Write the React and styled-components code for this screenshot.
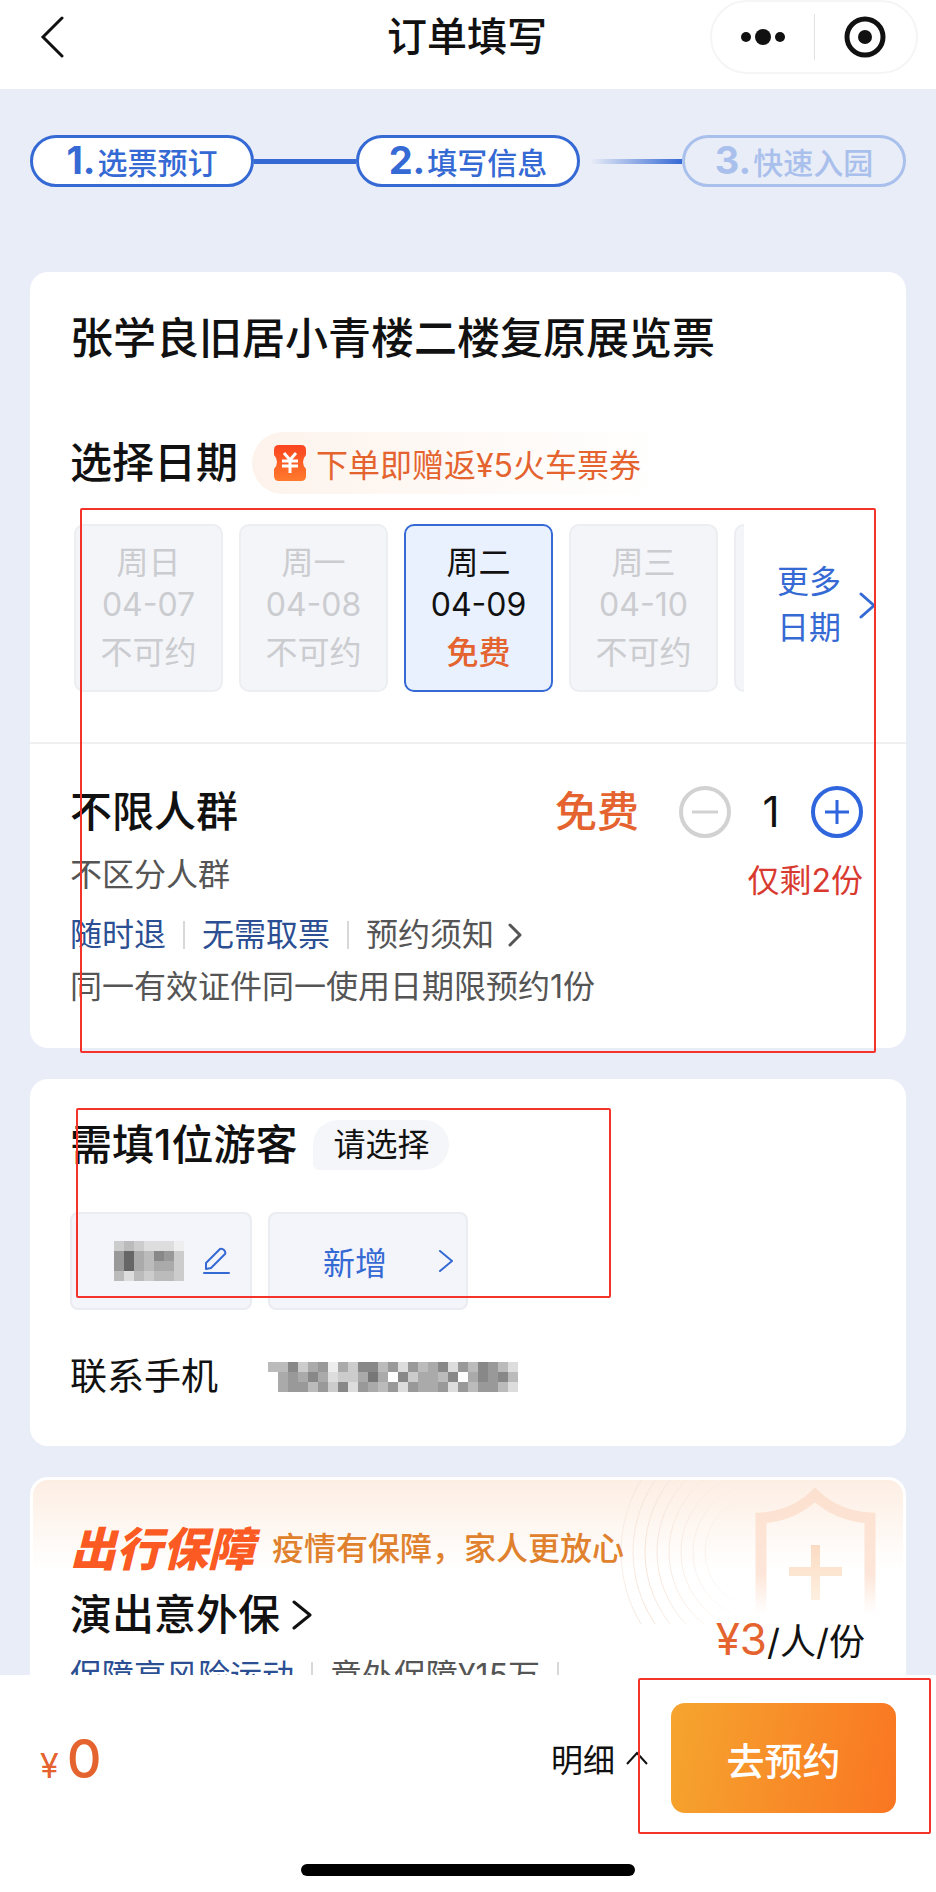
import React, { useState } from "react";
import styled, { createGlobalStyle, css } from "styled-components";

const GlobalStyle = createGlobalStyle`
  * {
    box-sizing: border-box;
  }
  body {
    margin: 0;
    background: #e9edf7;
    color: #111;
    font-family: Inter, "Noto Sans CJK SC", sans-serif;
    font-size: 32px;
  }
  h1, h2, h3, p, ol, ul {
    margin: 0;
    padding: 0;
    font-weight: 400;
    list-style: none;
  }
  button {
    margin: 0;
    padding: 0;
    border: 0;
    background: none;
    color: inherit;
    font: inherit;
    cursor: pointer;
  }
  a {
    color: inherit;
    text-decoration: none;
  }
  svg {
    display: block;
    flex: none;
  }
`;

// Data
const steps = [
  { number: "1.", label: "选票预订", state: "done" },
  { number: "2.", label: "填写信息", state: "current" },
  { number: "3.", label: "快速入园", state: "next" },
];

const dates = [
  { week: "周日", day: "04-07", status: "不可约" },
  { week: "周一", day: "04-08", status: "不可约" },
  { week: "周二", day: "04-09", status: "免费", open: true },
  { week: "周三", day: "04-10", status: "不可约" },
  { week: "", day: "", status: "" },
];

// each hex digit is one grey level
const nameMask = ["cbcddde", "96ab89c", "96abaac", "bdbcbbc"];
const phoneMask = [
  "bb8ca9eac88b9d9ba8d9b89bd",
  "fa9a8adcca7af8caab8fa898b",
  "fa99b9c8d9ab9d9aa9d9b99bd",
];

function Mosaic({ rows, cell, label }) {
  const width = rows[0].length * cell;
  const height = rows.length * cell;
  return (
    <svg width={width} height={height} role="img" aria-label={label} shapeRendering="crispEdges">
      {rows.map((row, y) =>
        row.split("").map((level, x) => (
          <rect
            key={`${x}-${y}`}
            x={x * cell}
            y={y * cell}
            width={cell}
            height={cell}
            fill={`#${level}${level}${level}`}
          />
        ))
      )}
    </svg>
  );
}

function Chevron({ width, height, stroke = 3 }) {
  return (
    <svg width={width} height={height} fill="none" stroke="currentColor" strokeWidth={stroke} strokeLinecap="round" strokeLinejoin="round">
      <path d={`M2 2 L${width - 2} ${height / 2} L2 ${height - 2}`} />
    </svg>
  );
}

function ShieldArt() {
  return (
    <Art width="300" height="150" viewBox="0 0 300 150" fill="none" aria-hidden="true">
      <defs>
        <linearGradient id="shieldFade" gradientUnits="userSpaceOnUse" x1="0" y1="0" x2="0" y2="134">
          <stop offset="0" stopColor="#fce0ce" />
          <stop offset="0.7" stopColor="#fde6d9" />
          <stop offset="1" stopColor="#fde6d9" stopOpacity="0" />
        </linearGradient>
        <linearGradient id="plusFade" gradientUnits="userSpaceOnUse" x1="0" y1="60" x2="0" y2="120">
          <stop offset="0" stopColor="#fbd9c0" />
          <stop offset="1" stopColor="#fdf0e0" />
        </linearGradient>
        <linearGradient id="ringFade" x1="0" y1="0" x2="1" y2="0">
          <stop offset="0" stopColor="#fff" stopOpacity="0.3" />
          <stop offset="0.3" stopColor="#fff" />
          <stop offset="1" stopColor="#fff" stopOpacity="0" />
        </linearGradient>
        <mask id="ringMask" maskUnits="userSpaceOnUse" x="0" y="0" width="140" height="144">
          <rect width="140" height="144" fill="url(#ringFade)" />
        </mask>
      </defs>
      <g mask="url(#ringMask)" stroke="#f5e4d8" strokeWidth="1">
        {[56, 68, 80, 92, 104, 116, 128, 140].map((r) => (
          <circle key={r} cx="158" cy="72" r={r} />
        ))}
      </g>
      <path
        d="M158 134 V38 Q190 36 212 15 Q234 36 267 38 V134"
        stroke="url(#shieldFade)"
        strokeWidth="11"
      />
      <path d="M208 65 h9 v22 h22 v9 h-22 v24 h-9 v-24 h-22 v-9 h22 z" fill="url(#plusFade)" />
    </Art>
  );
}

export default function App() {
  const [selected, setSelected] = useState("04-09");
  const [count, setCount] = useState(1);

  return (
    <Screen>
      <GlobalStyle />
      <TopBar>
        <BackButton type="button" aria-label="返回">
          <svg width="24" height="42" fill="none" stroke="currentColor" strokeWidth="3" strokeLinecap="round">
            <path d="M22 2 L3 21 L22 40" />
          </svg>
        </BackButton>
        <PageTitle>订单填写</PageTitle>
        <Capsule>
          <CapsuleButton type="button" aria-label="更多">
            <svg width="46" height="18" fill="currentColor">
              <circle cx="6" cy="9" r="5" />
              <circle cx="23" cy="9" r="8" />
              <circle cx="40" cy="9" r="5" />
            </svg>
          </CapsuleButton>
          <CapsuleButton type="button" aria-label="关闭">
            <svg width="44" height="44" fill="none">
              <circle cx="22" cy="22" r="18" stroke="currentColor" strokeWidth="5" />
              <circle cx="22" cy="22" r="7" fill="currentColor" />
            </svg>
          </CapsuleButton>
        </Capsule>
      </TopBar>

      <Content>
        <Steps>
          {steps.map((step, i) => (
            <React.Fragment key={step.number}>
              {i > 0 && <StepLine aria-hidden="true" $fade={step.state === "next"} />}
              <Step $next={step.state === "next"}>
                <StepNumber>{step.number}</StepNumber>
                {step.label}
              </Step>
            </React.Fragment>
          ))}
        </Steps>

        <Cards>
          <Card>
            <TicketTitle>张学良旧居小青楼二楼复原展览票</TicketTitle>
            <DateHeader>
              <Heading>选择日期</Heading>
              <Promo>
                <svg width="32" height="36" viewBox="0 0 32 36" fill="none">
                  <defs>
                    <linearGradient id="couponFill" x1="0" y1="0" x2="0" y2="1">
                      <stop offset="0" stopColor="#fb4420" />
                      <stop offset="1" stopColor="#ff7a2c" />
                    </linearGradient>
                  </defs>
                  <path
                    d="M5 0 H27 Q32 0 32 5 V10 Q29 13 29 17 Q29 21 32 24 V31 Q32 36 27 36 H5 Q0 36 0 31 V24 Q3 21 3 17 Q3 13 0 10 V5 Q0 0 5 0 Z"
                    fill="url(#couponFill)"
                  />
                  <path d="M10 8 L16 15 L22 8 M8 16 H24 M8 21 H24 M16 15 V28" stroke="#fff" strokeWidth="3" />
                </svg>
                下单即赠返¥5火车票券
              </Promo>
            </DateHeader>
            <DateRow>
              <DateList>
                {dates.map((item) => (
                  <DateTile
                    key={item.day}
                    type="button"
                    disabled={!item.open}
                    $active={item.open && item.day === selected}
                    onClick={() => setSelected(item.day)}
                  >
                    <span>{item.week}</span>
                    <span>{item.day}</span>
                    <DateStatus $open={item.open}>{item.status}</DateStatus>
                  </DateTile>
                ))}
              </DateList>
              <MoreDates type="button">
                <span>更多<br />日期</span>
                <Chevron width={17} height={27} />
              </MoreDates>
            </DateRow>

            <Ticket>
              <div>
                <Heading>不限人群</Heading>
                <Note>不区分人群</Note>
              </div>
              <TicketSide>
                <Stepper>
                  <FreePrice>免费</FreePrice>
                  <RoundButton type="button" aria-label="减少" disabled={count <= 1} onClick={() => setCount(count - 1)}>
                    <svg width="26" height="26" stroke="currentColor" strokeWidth="3">
                      <path d="M0 13 H26" />
                    </svg>
                  </RoundButton>
                  <Count>{count}</Count>
                  <RoundButton type="button" aria-label="增加" onClick={() => setCount(Math.min(2, count + 1))}>
                    <svg width="26" height="26" stroke="currentColor" strokeWidth="3">
                      <path d="M1 13 H25 M13 1 V25" />
                    </svg>
                  </RoundButton>
                </Stepper>
                <Remain>仅剩2份</Remain>
              </TicketSide>
              <TicketInfo>
                <Tags>
                  <Tag $blue>随时退</Tag>
                  <Tag $blue>无需取票</Tag>
                  <Tag>
                    <TagLink href="#notice">
                      预约须知
                      <Chevron width={14} height={24} />
                    </TagLink>
                  </Tag>
                </Tags>
                <Limit>同一有效证件同一使用日期限预约1份</Limit>
              </TicketInfo>
            </Ticket>
            <Mark $top={236} $left={50} $right={30} $bottom={-5} />
          </Card>

          <VisitorCard>
            <VisitorHeader>
              <Heading>需填1位游客</Heading>
              <SelectHint>请选择</SelectHint>
            </VisitorHeader>
            <VisitorRow>
              <VisitorButton type="button" $name>
                <Mosaic rows={nameMask} cell={10} label="游客" />
                <svg width="27" height="28" fill="none" stroke="#3569d4" strokeWidth="2" strokeLinejoin="round" strokeLinecap="round">
                  <path d="M3 22 V16 L17 2 Q19 1 21 3 Q23 5 22 7 L8 21 Z M1 26 H26" />
                </svg>
              </VisitorButton>
              <VisitorButton type="button">
                新增
                <Chevron width={16} height={24} stroke={2} />
              </VisitorButton>
            </VisitorRow>
            <Contact>
              <span>联系手机</span>
              <Mosaic rows={phoneMask} cell={10} label="手机号" />
            </Contact>
            <Mark $top={29} $left={46} $right={295} $bottom={148} />
          </VisitorCard>

          <InsuranceCard>
            <ShieldArt />
            <Guarantee>
              <GuaranteeTitle>出行保障</GuaranteeTitle>
              <Slogan>疫情有保障，家人更放心</Slogan>
            </Guarantee>
            <InsuranceBody>
              <div>
                <InsuranceLink href="#insurance">
                  演出意外保
                  <Chevron width={20} height={30} />
                </InsuranceLink>
                <Tags>
                  <Tag $blue>保障高风险运动</Tag>
                  <Tag>意外保障¥15万</Tag>
                  <Tag />
                </Tags>
              </div>
              <UnitPrice>
                <strong>¥3</strong>/人/份
              </UnitPrice>
            </InsuranceBody>
          </InsuranceCard>
        </Cards>
      </Content>

      <Footer>
        <PayBar>
          <Total>
            <small>¥</small>0
          </Total>
          <Detail type="button">
            明细
            <svg width="24" height="16" fill="none" stroke="currentColor" strokeWidth="2">
              <path d="M2 14 L12 3 L22 14" />
            </svg>
          </Detail>
          <Submit type="button">去预约</Submit>
        </PayBar>
        <HomeIndicator />
        <Mark $top={3} $left={638} $right={5} $bottom={58} />
      </Footer>
    </Screen>
  );
}

// Layout
const Screen = styled.div`
  display: flex;
  flex-direction: column;
  height: 100vh;
  overflow: hidden;
`;
const Content = styled.main`
  flex: 1;
  min-height: 0;
  padding: 0 30px;
  overflow-y: auto;
  scrollbar-width: none;
`;

// Top bar
const TopBar = styled.header`
  display: grid;
  grid-template-columns: 1fr auto 1fr;
  align-items: center;
  flex: none;
  height: 89px;
  padding: 0 18px 15px 40px;
  background: #fff;
`;
const BackButton = styled.button`
  justify-self: start;
`;
const PageTitle = styled.h1`
  padding-right: 24px;
  font-size: 40px;
  font-weight: 500;
  line-height: 60px;
`;
const Capsule = styled.div`
  display: flex;
  justify-self: end;
  width: 208px;
  height: 74px;
  border: 2px solid #f5f5f5;
  border-radius: 37px;
`;
const CapsuleButton = styled.button`
  display: flex;
  flex: 1;
  align-items: center;
  justify-content: center;
  & + & {
    margin: 12px 0;
    border-left: 1px solid #e2e2e2;
  }
`;

// Steps
const Steps = styled.ol`
  display: flex;
  align-items: center;
  padding: 46px 0 85px;
`;
const Step = styled.li`
  display: flex;
  align-items: baseline;
  justify-content: center;
  gap: 2px;
  width: 224px;
  height: 52px;
  border: 3px solid #3569d4;
  border-radius: 26px;
  background: #fff;
  color: #3569d4;
  font-size: 30px;
  font-weight: 500;
  line-height: 44px;
  ${(props) =>
    props.$next &&
    css`
      border-color: #a9c0ec;
      background: transparent;
      color: #a9c0ec;
    `}
`;
const StepNumber = styled.span`
  font-size: 38px;
  font-weight: 700;
`;
const StepLine = styled.li`
  flex: 1;
  height: 5px;
  background: ${(props) => (props.$fade ? "linear-gradient(90deg, rgba(53, 105, 212, 0) 10%, #3569d4)" : "#3569d4")};
`;

// Cards
const Cards = styled.div`
  display: flex;
  flex-direction: column;
  gap: 31px;
`;
const Card = styled.section`
  position: relative;
  padding: 36px 0 38px;
  border-radius: 18px;
  background: #fff;
`;
const Heading = styled.h3`
  font-size: 42px;
  font-weight: 500;
  line-height: 52px;
`;
const TicketTitle = styled.h2`
  padding: 0 40px;
  font-size: 43px;
  font-weight: 500;
  line-height: 60px;
`;
const DateHeader = styled.div`
  display: flex;
  align-items: center;
  gap: 14px;
  margin-top: 64px;
  padding: 0 40px;
`;
const Promo = styled.p`
  display: flex;
  align-items: center;
  gap: 10px;
  height: 62px;
  padding: 0 22px;
  border-radius: 31px 0 0 31px;
  background: linear-gradient(90deg, #fdf3ec, #fff);
  color: #e4632f;
`;
const DateRow = styled.div`
  display: flex;
  justify-content: space-between;
  margin-top: 30px;
  padding: 0 30px 0 44px;
`;
const DateList = styled.div`
  display: flex;
  gap: 16px;
  width: 670px;
  overflow: hidden;
`;
const DateTile = styled.button`
  display: flex;
  flex: none;
  flex-direction: column;
  align-items: center;
  width: 149px;
  height: 168px;
  padding-top: 16px;
  border: 2px solid ${(props) => (props.$active ? "#3569d4" : "#eceef2")};
  border-radius: 10px;
  background: ${(props) => (props.$active ? "#e9f1ff" : "#f4f5f8")};
  color: ${(props) => (props.$active ? "#111" : "#cbccd0")};
  line-height: 42px;
`;
const DateStatus = styled.span`
  margin-top: 6px;
  ${(props) =>
    props.$open &&
    css`
      color: #e4632f;
      font-weight: 500;
    `}
`;
const MoreDates = styled.button`
  display: flex;
  align-items: center;
  gap: 18px;
  padding-bottom: 6px;
  color: #3569d4;
  line-height: 46px;
`;

// Ticket
const Ticket = styled.div`
  display: grid;
  grid-template-columns: 1fr auto;
  margin-top: 50px;
  padding: 42px 43px 0 40px;
  border-top: 2px solid #eeeff1;
`;
const Note = styled.p`
  margin-top: 14px;
  color: #555;
  line-height: 46px;
`;
const TicketSide = styled.div`
  display: flex;
  flex-direction: column;
  align-items: flex-end;
  gap: 20px;
  height: 112px;
`;
const Stepper = styled.div`
  display: flex;
  align-items: center;
`;
const FreePrice = styled.span`
  margin-right: 40px;
  color: #e4632f;
  font-size: 42px;
  font-weight: 500;
  line-height: 52px;
`;
const RoundButton = styled.button`
  display: flex;
  align-items: center;
  justify-content: center;
  width: 52px;
  height: 52px;
  border: 4px solid #2f66dd;
  border-radius: 50%;
  color: #2f66dd;
  &:disabled {
    border-color: #d2d2d2;
    color: #d2d2d2;
  }
`;
const Count = styled.output`
  width: 80px;
  font-size: 42px;
  line-height: 52px;
  text-align: center;
`;
const Remain = styled.p`
  color: #d93a30;
  line-height: 46px;
`;
const TicketInfo = styled.div`
  grid-column: 1 / -1;
  margin-top: 14px;
`;
const Tags = styled.ul`
  display: flex;
  color: #555;
  line-height: 46px;
`;
const Tag = styled.li`
  display: flex;
  align-items: center;
  color: ${(props) => (props.$blue ? "#2c4f93" : "#555")};
  &:not(:first-child)::before {
    width: 2px;
    height: 28px;
    margin: 0 17px;
    background: #d8d8d8;
    content: "";
  }
`;
const TagLink = styled.a`
  display: flex;
  align-items: center;
  gap: 14px;
`;
const Limit = styled.p`
  margin-top: 6px;
  color: #555;
  line-height: 46px;
`;

// Visitors
const VisitorCard = styled(Card)`
  padding: 41px 40px 44px;
`;
const VisitorHeader = styled.div`
  display: flex;
  align-items: center;
  gap: 16px;
  height: 50px;
`;
const SelectHint = styled.span`
  padding: 0 20px;
  border-radius: 25px 25px 25px 6px;
  background: #f4f6f9;
  line-height: 50px;
`;
const VisitorRow = styled.div`
  display: flex;
  gap: 16px;
  margin-top: 42px;
`;
const VisitorButton = styled.button`
  display: flex;
  align-items: center;
  justify-content: space-between;
  width: ${(props) => (props.$name ? "182px" : "200px")};
  height: 98px;
  padding: ${(props) => (props.$name ? "0 20px 0 42px" : "0 12px 0 53px")};
  border: 2px solid #eaecf1;
  border-radius: 8px;
  background: #f4f5fa;
  color: #3569d4;
`;
const Contact = styled.div`
  display: flex;
  align-items: center;
  gap: 50px;
  margin-top: 42px;
  font-size: 37px;
  line-height: 50px;
`;

// Insurance
const InsuranceCard = styled(Card)`
  padding: 39px 38px 30px 37px;
  border: 3px solid #fff;
  background: linear-gradient(180deg, #fdeee3, #fff 90px);
`;
const Art = styled.svg`
  position: absolute;
  top: 0;
  right: 0;
`;
const Guarantee = styled.div`
  position: relative;
  display: flex;
  align-items: center;
  gap: 18px;
  line-height: 60px;
`;
const GuaranteeTitle = styled.h3`
  color: #fb5a22;
  font-size: 46px;
  font-style: italic;
  font-weight: 900;
`;
const Slogan = styled.p`
  color: #e0812d;
  font-weight: 500;
`;
const InsuranceBody = styled.div`
  position: relative;
  display: flex;
  justify-content: space-between;
  padding-top: 8px;
`;
const InsuranceLink = styled.a`
  display: flex;
  align-items: center;
  gap: 12px;
  margin-bottom: 10px;
  font-size: 42px;
  font-weight: 500;
  line-height: 56px;
`;
const UnitPrice = styled.p`
  padding-top: 24px;
  font-size: 36px;
  line-height: 56px;
  strong {
    color: #e4632f;
    font-size: 44px;
    font-weight: 400;
  }
`;

// Footer
const Footer = styled.footer`
  position: relative;
  flex: none;
  padding: 28px 40px 16px;
  background: #fff;
`;
const PayBar = styled.div`
  display: flex;
  align-items: center;
`;
const Total = styled.p`
  margin-right: auto;
  color: #e4632f;
  font-size: 54px;
  font-weight: 500;
  small {
    margin-right: 8px;
    font-size: 34px;
    font-weight: 400;
  }
`;
const Detail = styled.button`
  display: flex;
  align-items: center;
  gap: 10px;
  margin-right: 22px;
`;
const Submit = styled.button`
  width: 225px;
  height: 110px;
  border-radius: 14px;
  background: linear-gradient(100deg, #f5a52f, #fa7622);
  color: #fff;
  font-size: 38px;
  font-weight: 500;
`;
const HomeIndicator = styled.div`
  width: 334px;
  height: 12px;
  margin: 51px auto 0;
  border-radius: 6px;
  background: #000;
`;

// Red frame drawn over the area to fill in
const Mark = styled.div`
  position: absolute;
  top: ${(props) => props.$top}px;
  right: ${(props) => props.$right}px;
  bottom: ${(props) => props.$bottom}px;
  left: ${(props) => props.$left}px;
  border: 2px solid #f4332b;
  border-radius: 2px;
  pointer-events: none;
`;
